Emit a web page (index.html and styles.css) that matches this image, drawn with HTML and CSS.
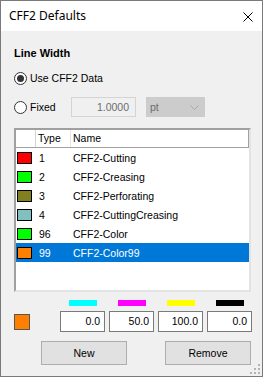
FILE: index.html
```html
<!DOCTYPE html>
<html lang="en">
<head>
    <meta charset="UTF-8">
    <meta name="viewport" content="width=device-width, initial-scale=1.0">
    <title>CFF2 Defaults</title>
    <link rel="stylesheet" href="styles.css">
</head>
<body>
    <div class="dialog">
        <div class="titlebar">
            <span class="title">CFF2 Defaults</span>
            <svg class="close" width="10" height="10" viewBox="0 0 10 10">
                <path d="M0.5 0.5 L9.5 9.5 M9.5 0.5 L0.5 9.5" stroke="#000" stroke-width="1" fill="none"/>
            </svg>
        </div>

        <div class="content">
            <div class="group-label">Line Width</div>

            <div class="radio-row first">
                <span class="radio checked"></span>
                <span class="radio-text">Use CFF2 Data</span>
            </div>

            <div class="radio-row second">
                <span class="radio"></span>
                <span class="radio-text fixed">Fixed</span>
                <div class="num-box">1.0000</div>
                <div class="combo">
                    <span>pt</span>
                    <svg width="9" height="5" viewBox="0 0 9 5">
                        <path d="M0.5 0.5 L4.5 4.5 L8.5 0.5" stroke="#a8a8a8" stroke-width="1" fill="none"/>
                    </svg>
                </div>
            </div>

            <div class="list">
                <div class="list-head">
                    <div class="head-cell"></div>
                    <div class="head-cell">Type</div>
                    <div class="head-cell">Name</div>
                </div>
                <div class="list-row">
                    <div class="cell"><span class="swatch red"></span></div>
                    <div class="cell">1</div>
                    <div class="cell">CFF2-Cutting</div>
                </div>
                <div class="list-row">
                    <div class="cell"><span class="swatch green"></span></div>
                    <div class="cell">2</div>
                    <div class="cell">CFF2-Creasing</div>
                </div>
                <div class="list-row">
                    <div class="cell"><span class="swatch olive"></span></div>
                    <div class="cell">3</div>
                    <div class="cell">CFF2-Perforating</div>
                </div>
                <div class="list-row">
                    <div class="cell"><span class="swatch teal"></span></div>
                    <div class="cell">4</div>
                    <div class="cell">CFF2-CuttingCreasing</div>
                </div>
                <div class="list-row">
                    <div class="cell"><span class="swatch green"></span></div>
                    <div class="cell">96</div>
                    <div class="cell">CFF2-Color</div>
                </div>
                <div class="list-row selected">
                    <div class="cell"><span class="swatch orange"></span></div>
                    <div class="cell">99</div>
                    <div class="cell">CFF2-Color99</div>
                </div>
            </div>

            <div class="cmyk-bars">
                <div class="bar-cell"><span class="bar cyan"></span></div>
                <div class="bar-cell"><span class="bar magenta"></span></div>
                <div class="bar-cell"><span class="bar yellow"></span></div>
                <div class="bar-cell"><span class="bar black"></span></div>
            </div>

            <div class="cmyk-row">
                <span class="current-color"></span>
                <div class="value-box">0.0</div>
                <div class="value-box">50.0</div>
                <div class="value-box">100.0</div>
                <div class="value-box">0.0</div>
            </div>

            <div class="buttons">
                <button type="button" class="btn">New</button>
                <button type="button" class="btn">Remove</button>
            </div>
        </div>

        <svg class="grip" width="10" height="10" viewBox="0 0 10 10">
            <rect x="8" y="0" width="2" height="2" fill="#b4b4b4"/>
            <rect x="4" y="4" width="2" height="2" fill="#b4b4b4"/>
            <rect x="8" y="4" width="2" height="2" fill="#b4b4b4"/>
            <rect x="0" y="8" width="2" height="2" fill="#b4b4b4"/>
            <rect x="4" y="8" width="2" height="2" fill="#b4b4b4"/>
            <rect x="8" y="8" width="2" height="2" fill="#b4b4b4"/>
        </svg>
    </div>
</body>
</html>
```

FILE: styles.css
```css
body {
    margin: 0;
    font-family: "Liberation Sans", Arial, sans-serif;
    font-size: 10.5px;
    color: #000;
}
.dialog {
    position: relative;
    width: 263px;
    height: 377px;
    box-sizing: border-box;
    border: 1px solid #7a7a7a;
    background: #f0f0f0;
}
.titlebar {
    height: 30px;
    background: #fff;
    display: flex;
    align-items: center;
    justify-content: space-between;
    padding: 0 9px 0 8px;
}
.title {
    font-family: "Noto Sans", "Open Sans", sans-serif;
    font-size: 12px;
    margin-top: -1px;
}
.close {
    display: block;
    margin-top: 1px;
}
.content {
    padding-left: 13px;
}
.group-label {
    margin-top: 16px;
    font-weight: bold;
    font-size: 11px;
    line-height: 13px;
}
.radio-row {
    display: flex;
    align-items: center;
    height: 20px;
}
.radio-row.first {
    margin-top: 8px;
}
.radio-row.second {
    margin-top: 9px;
}
.radio {
    width: 13px;
    height: 13px;
    box-sizing: border-box;
    border: 1px solid #333;
    border-radius: 50%;
    background: #fff;
    display: flex;
    align-items: center;
    justify-content: center;
}
.radio.checked::after {
    content: "";
    width: 7px;
    height: 7px;
    border-radius: 50%;
    background: #333;
}
.radio-text {
    margin-left: 3px;
}
.radio-text.fixed {
    width: 41px;
}
.num-box {
    width: 65px;
    height: 20px;
    box-sizing: border-box;
    border: 1px solid #d4d4d4;
    background: #f0f0f0;
    color: #6d6d6d;
    text-align: right;
    line-height: 18px;
    padding-right: 6px;
}
.combo {
    width: 59px;
    height: 20px;
    margin-left: 10px;
    box-sizing: border-box;
    background: #cccccc;
    color: #6d6d6d;
    display: flex;
    align-items: center;
    justify-content: space-between;
    padding: 0 6px 0 4px;
}
.list {
    margin-top: 11px;
    width: 237px;
    height: 164px;
    box-sizing: border-box;
    border: 2px solid;
    border-color: #a0a0a0 #e3e3e3 #e3e3e3 #a0a0a0;
    background: #fff;
    overflow: hidden;
}
.list-head, .list-row {
    display: grid;
    grid-template-columns: 20px 35px 1fr;
}
.list-head {
    height: 18px;
    width: 233px;
    box-sizing: border-box;
    border-bottom: 1px solid #a0a0a0;
    border-right: 1px solid #a0a0a0;
    background: #fff;
}
.head-cell {
    line-height: 17px;
    border-right: 1px solid #e5e5e5;
    padding-left: 2px;
}
.head-cell:first-child {
    border-color: #d5d5d5;
}
.head-cell:last-child {
    border-right: none;
}
.list-row {
    height: 19px;
    align-items: center;
}
.list-row .cell {
    padding-left: 3px;
}
.list-row .cell:first-child {
    padding-left: 1px;
    display: flex;
}
.list-row .cell:last-child {
    padding-left: 2px;
}
.list-row.selected {
    background: #0078d7;
    color: #fff;
}
.swatch {
    width: 15px;
    height: 12px;
    box-sizing: border-box;
    border: 1px solid #000;
    margin-top: 1px;
}
.red { background: #ff0000; }
.green { background: #00ff00; }
.olive { background: #808020; }
.teal { background: #80c0c0; }
.orange { background: #ff8000; }
.cmyk-bars, .cmyk-row {
    display: flex;
    gap: 4px;
    padding-left: 46px;
}
.cmyk-bars {
    margin-top: 8px;
    height: 6px;
}
.bar-cell {
    width: 45px;
    display: flex;
    justify-content: center;
}
.bar {
    width: 28px;
    height: 6px;
}
.cyan { background: #00ffff; }
.magenta { background: #ff00ff; }
.yellow { background: #ffff00; }
.black { background: #000; }
.cmyk-row {
    position: relative;
    margin-top: 5px;
    height: 21px;
}
.current-color {
    position: absolute;
    left: 0;
    top: 3px;
    width: 16px;
    height: 16px;
    box-sizing: border-box;
    border: 1px solid #555;
    background: #ff8000;
}
.value-box {
    width: 45px;
    height: 21px;
    box-sizing: border-box;
    border: 1px solid #7a7a7a;
    background: #fff;
    text-align: right;
    padding-right: 4px;
    line-height: 19px;
}
.buttons {
    display: flex;
    gap: 38px;
    margin-top: 9px;
    padding-left: 27px;
}
.btn {
    width: 86px;
    height: 24px;
    font-family: "Liberation Sans", Arial, sans-serif;
    font-size: 10.5px;
    color: #000;
    background: #e1e1e1;
    border: 1px solid #adadad;
    padding: 0;
}
.grip {
    position: absolute;
    right: 2px;
    bottom: 2px;
}
```
